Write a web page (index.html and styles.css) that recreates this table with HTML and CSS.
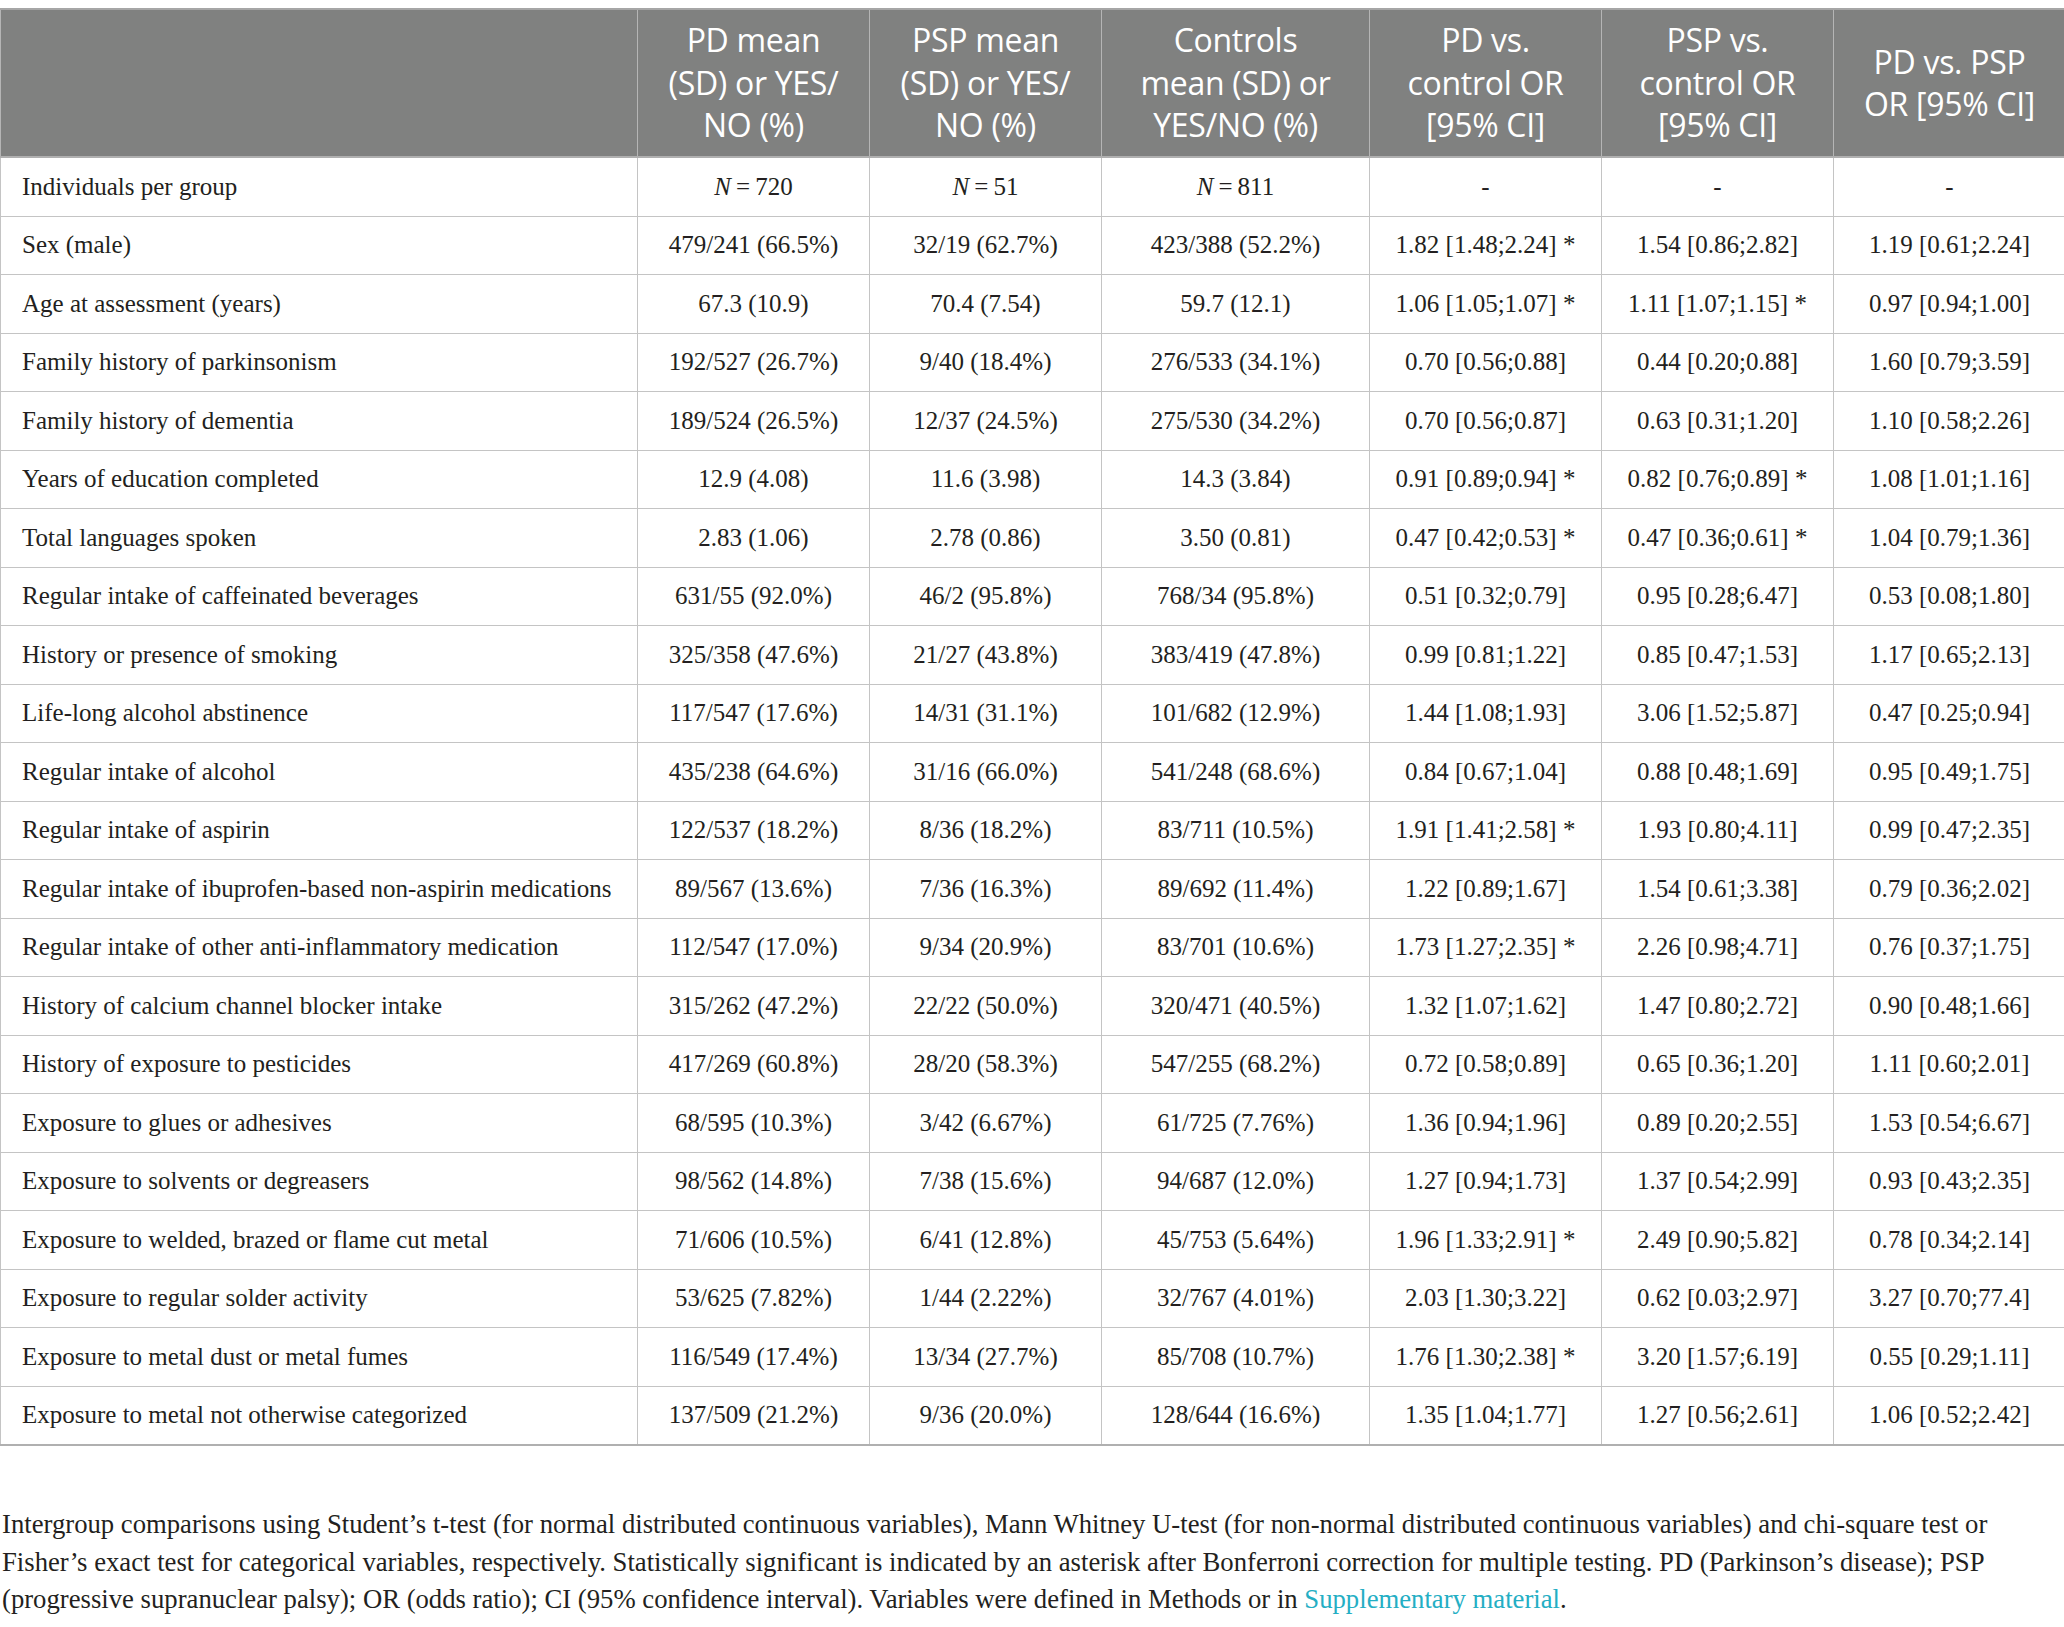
FILE: index.html
```html
<!DOCTYPE html>
<html lang="en">
<head>
<meta charset="utf-8">
<title>Table</title>
<link rel="stylesheet" href="styles.css">
</head>
<body>
<div class="page">
<table class="data">
<colgroup>
<col class="c-label"><col class="c-num"><col class="c-num"><col class="c-wide"><col class="c-num"><col class="c-num"><col class="c-num">
</colgroup>
<thead>
<tr>
<th></th>
<th>PD mean<br>(SD) or YES/<br>NO (%)</th>
<th>PSP mean<br>(SD) or YES/<br>NO (%)</th>
<th>Controls<br>mean (SD) or<br>YES/NO (%)</th>
<th>PD vs.<br>control OR<br>[95% CI]</th>
<th>PSP vs.<br>control OR<br>[95% CI]</th>
<th>PD vs. PSP<br>OR [95% CI]</th>
</tr>
</thead>
<tbody>
<tr><td>Individuals per group</td><td><i>N</i>&#8201;=&#8201;720</td><td><i>N</i>&#8201;=&#8201;51</td><td><i>N</i>&#8201;=&#8201;811</td><td>-</td><td>-</td><td>-</td></tr>
<tr><td>Sex (male)</td><td>479/241 (66.5%)</td><td>32/19 (62.7%)</td><td>423/388 (52.2%)</td><td>1.82 [1.48;2.24] *</td><td>1.54 [0.86;2.82]</td><td>1.19 [0.61;2.24]</td></tr>
<tr><td>Age at assessment (years)</td><td>67.3 (10.9)</td><td>70.4 (7.54)</td><td>59.7 (12.1)</td><td>1.06 [1.05;1.07] *</td><td>1.11 [1.07;1.15] *</td><td>0.97 [0.94;1.00]</td></tr>
<tr><td>Family history of parkinsonism</td><td>192/527 (26.7%)</td><td>9/40 (18.4%)</td><td>276/533 (34.1%)</td><td>0.70 [0.56;0.88]</td><td>0.44 [0.20;0.88]</td><td>1.60 [0.79;3.59]</td></tr>
<tr><td>Family history of dementia</td><td>189/524 (26.5%)</td><td>12/37 (24.5%)</td><td>275/530 (34.2%)</td><td>0.70 [0.56;0.87]</td><td>0.63 [0.31;1.20]</td><td>1.10 [0.58;2.26]</td></tr>
<tr><td>Years of education completed</td><td>12.9 (4.08)</td><td>11.6 (3.98)</td><td>14.3 (3.84)</td><td>0.91 [0.89;0.94] *</td><td>0.82 [0.76;0.89] *</td><td>1.08 [1.01;1.16]</td></tr>
<tr><td>Total languages spoken</td><td>2.83 (1.06)</td><td>2.78 (0.86)</td><td>3.50 (0.81)</td><td>0.47 [0.42;0.53] *</td><td>0.47 [0.36;0.61] *</td><td>1.04 [0.79;1.36]</td></tr>
<tr><td>Regular intake of caffeinated beverages</td><td>631/55 (92.0%)</td><td>46/2 (95.8%)</td><td>768/34 (95.8%)</td><td>0.51 [0.32;0.79]</td><td>0.95 [0.28;6.47]</td><td>0.53 [0.08;1.80]</td></tr>
<tr><td>History or presence of smoking</td><td>325/358 (47.6%)</td><td>21/27 (43.8%)</td><td>383/419 (47.8%)</td><td>0.99 [0.81;1.22]</td><td>0.85 [0.47;1.53]</td><td>1.17 [0.65;2.13]</td></tr>
<tr><td>Life-long alcohol abstinence</td><td>117/547 (17.6%)</td><td>14/31 (31.1%)</td><td>101/682 (12.9%)</td><td>1.44 [1.08;1.93]</td><td>3.06 [1.52;5.87]</td><td>0.47 [0.25;0.94]</td></tr>
<tr><td>Regular intake of alcohol</td><td>435/238 (64.6%)</td><td>31/16 (66.0%)</td><td>541/248 (68.6%)</td><td>0.84 [0.67;1.04]</td><td>0.88 [0.48;1.69]</td><td>0.95 [0.49;1.75]</td></tr>
<tr><td>Regular intake of aspirin</td><td>122/537 (18.2%)</td><td>8/36 (18.2%)</td><td>83/711 (10.5%)</td><td>1.91 [1.41;2.58] *</td><td>1.93 [0.80;4.11]</td><td>0.99 [0.47;2.35]</td></tr>
<tr><td>Regular intake of ibuprofen-based non-aspirin medications</td><td>89/567 (13.6%)</td><td>7/36 (16.3%)</td><td>89/692 (11.4%)</td><td>1.22 [0.89;1.67]</td><td>1.54 [0.61;3.38]</td><td>0.79 [0.36;2.02]</td></tr>
<tr><td>Regular intake of other anti-inflammatory medication</td><td>112/547 (17.0%)</td><td>9/34 (20.9%)</td><td>83/701 (10.6%)</td><td>1.73 [1.27;2.35] *</td><td>2.26 [0.98;4.71]</td><td>0.76 [0.37;1.75]</td></tr>
<tr><td>History of calcium channel blocker intake</td><td>315/262 (47.2%)</td><td>22/22 (50.0%)</td><td>320/471 (40.5%)</td><td>1.32 [1.07;1.62]</td><td>1.47 [0.80;2.72]</td><td>0.90 [0.48;1.66]</td></tr>
<tr><td>History of exposure to pesticides</td><td>417/269 (60.8%)</td><td>28/20 (58.3%)</td><td>547/255 (68.2%)</td><td>0.72 [0.58;0.89]</td><td>0.65 [0.36;1.20]</td><td>1.11 [0.60;2.01]</td></tr>
<tr><td>Exposure to glues or adhesives</td><td>68/595 (10.3%)</td><td>3/42 (6.67%)</td><td>61/725 (7.76%)</td><td>1.36 [0.94;1.96]</td><td>0.89 [0.20;2.55]</td><td>1.53 [0.54;6.67]</td></tr>
<tr><td>Exposure to solvents or degreasers</td><td>98/562 (14.8%)</td><td>7/38 (15.6%)</td><td>94/687 (12.0%)</td><td>1.27 [0.94;1.73]</td><td>1.37 [0.54;2.99]</td><td>0.93 [0.43;2.35]</td></tr>
<tr><td>Exposure to welded, brazed or flame cut metal</td><td>71/606 (10.5%)</td><td>6/41 (12.8%)</td><td>45/753 (5.64%)</td><td>1.96 [1.33;2.91] *</td><td>2.49 [0.90;5.82]</td><td>0.78 [0.34;2.14]</td></tr>
<tr><td>Exposure to regular solder activity</td><td>53/625 (7.82%)</td><td>1/44 (2.22%)</td><td>32/767 (4.01%)</td><td>2.03 [1.30;3.22]</td><td>0.62 [0.03;2.97]</td><td>3.27 [0.70;77.4]</td></tr>
<tr><td>Exposure to metal dust or metal fumes</td><td>116/549 (17.4%)</td><td>13/34 (27.7%)</td><td>85/708 (10.7%)</td><td>1.76 [1.30;2.38] *</td><td>3.20 [1.57;6.19]</td><td>0.55 [0.29;1.11]</td></tr>
<tr><td>Exposure to metal not otherwise categorized</td><td>137/509 (21.2%)</td><td>9/36 (20.0%)</td><td>128/644 (16.6%)</td><td>1.35 [1.04;1.77]</td><td>1.27 [0.56;2.61]</td><td>1.06 [0.52;2.42]</td></tr>
</tbody>
</table>
<p class="note">Intergroup comparisons using Student’s t-test (for normal distributed continuous variables), Mann Whitney U-test (for non-normal distributed continuous variables) and chi-square test or<br>Fisher’s exact test for categorical variables, respectively. Statistically significant is indicated by an asterisk after Bonferroni correction for multiple testing. PD (Parkinson’s disease); PSP<br>(progressive supranuclear palsy); OR (odds ratio); CI (95% confidence interval). Variables were defined in Methods or in <a class="link" href="#">Supplementary material</a>.</p>
</div>
</body>
</html>
```
FILE: styles.css
```css
html, body {
  margin: 0;
  padding: 0;
  background: #ffffff;
}
.page {
  padding-top: 8px;
  width: 2064px;
}
.data {
  width: 2064px;
  table-layout: fixed;
  border-collapse: collapse;
  font-family: "Liberation Serif", "Times New Roman", serif;
  font-size: 25px;
  color: #231f20;
}
.c-label { width: 637px; }
.c-num { width: 232px; }
.c-wide { width: 268px; }
.data thead th {
  background: #808180;
  color: #ffffff;
  font-family: "Open Sans", "Liberation Sans", sans-serif;
  font-weight: 400;
  font-size: 32px;
  line-height: 42.5px;
  letter-spacing: -0.3px;
  text-align: center;
  vertical-align: middle;
  height: 146px;
  padding: 0 2px;
  border-left: 1px solid #b5b5b5;
  border-right: 1px solid #b5b5b5;
  border-top: 2px solid #a6a6a6;
  border-bottom: 2px solid #b0b0b0;
}
.data tbody td {
  height: 57.5px;
  padding: 0 10px;
  text-align: center;
  vertical-align: middle;
  line-height: 30px;
  border: 1px solid #c4c4c4;
  white-space: nowrap;
}
.data tbody td:first-child {
  text-align: left;
  padding-left: 21px;
}
.data tbody tr:last-child td {
  border-bottom: 2px solid #b0b0b0;
}
.data td i {
  font-style: italic;
}
.note {
  margin: 60px 0 0 2px;
  font-family: "Liberation Serif", "Times New Roman", serif;
  font-size: 26.7px;
  line-height: 37.5px;
  color: #231f20;
  white-space: nowrap;
}
.link {
  color: #24aec4;
  text-decoration: none;
}
```
